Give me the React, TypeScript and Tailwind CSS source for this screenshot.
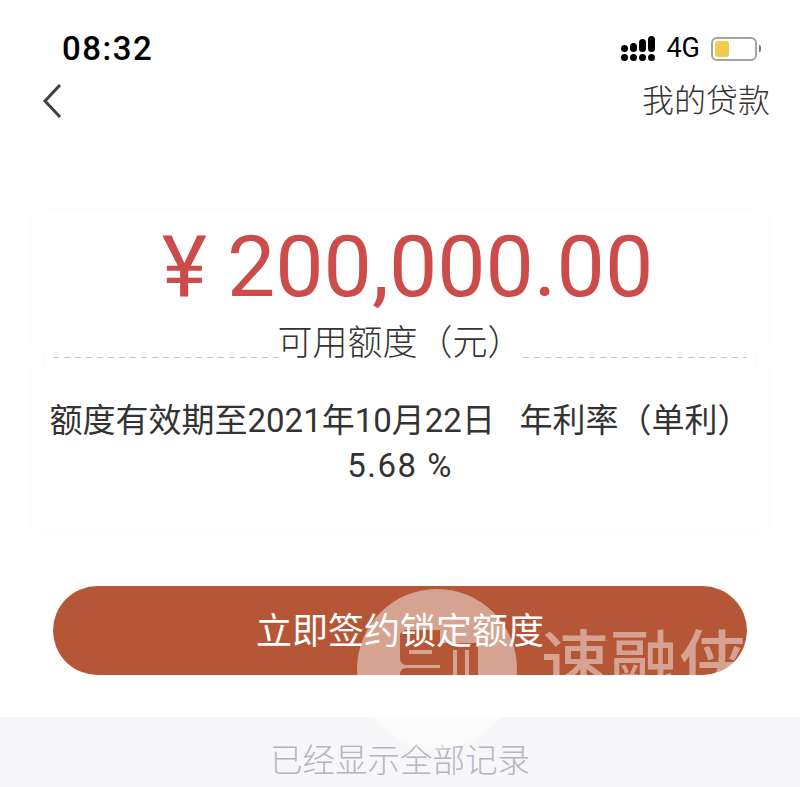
const SANS = "font-['Roboto','Noto_Sans_CJK_SC',sans-serif]"

function SignalIcon() {
  const bars = ['h-[7px]', 'h-[9px]', 'h-[13px]', 'h-[16px]']
  return (
    <div className="flex items-end gap-[2px]">
      {bars.map((h) => (
        <div key={h} className="flex w-[7px] flex-col gap-[2px]">
          <div className={`${h} rounded-full bg-black`} />
          <div className="h-[7px] rounded-full bg-black" />
        </div>
      ))}
    </div>
  )
}

function BatteryIcon() {
  return (
    <div className="flex items-center gap-[2px]">
      <div className="flex h-[24px] w-[46px] items-center rounded-[6px] border-2 border-[#a3a3a3] p-[2px]">
        <div className="h-full w-[14px] rounded-[3px] bg-[#f3ca4c]" />
      </div>
      <div className="h-[7px] w-[2px] rounded-r-full bg-[#777]" />
    </div>
  )
}

function Watermark() {
  return (
    <div className="pointer-events-none absolute left-[357px] top-[589px] flex items-center text-white/45">
      <svg width="160" height="160" viewBox="0 0 160 160">
        <path
          fill="#fff"
          fillOpacity="0.45"
          fillRule="evenodd"
          d="M80 0a80 80 0 1 0 0 160a80 80 0 1 0 0-160ZM49 41h34v35H49a6 6 0 0 1-6-6V47a6 6 0 0 1 6-6ZM52 61v4h23v-4ZM49 79h34v25H43V85a6 6 0 0 1 6-6ZM83 54h38v50H83ZM96 61v29h4V61ZM108 61v29h4V61Z"
        />
      </svg>
      <span className="ml-[24px] -mt-[10px] whitespace-nowrap text-[68px] font-medium leading-none tracking-[1px]">
        速融侠
      </span>
    </div>
  )
}

export default function App() {
  return (
    <div className={`relative h-[787px] w-[800px] overflow-hidden bg-white ${SANS}`}>
      {/* 状态栏 */}
      <div className="flex h-[68px] items-end justify-between pl-[62px] pr-[39px]">
        <span className="text-[33px] font-medium leading-[38px] tracking-[1.5px] text-black">08:32</span>
        <div className="flex items-center gap-[11px] pb-[6px]">
          <SignalIcon />
          <span className="text-[27px] leading-none text-black">4G</span>
          <BatteryIcon />
        </div>
      </div>

      {/* 导航 */}
      <div className="mt-[8px] flex h-[50px] items-center justify-between pl-[42px] pr-[30px]">
        <svg width="20" height="34" viewBox="0 0 20 34" fill="none" stroke="#3f3f3f" strokeWidth="3">
          <path d="M18 1 3 17l15 16" />
        </svg>
        <span className="text-[32px] font-light leading-none text-[#333]">我的贷款</span>
      </div>

      {/* 额度卡片 */}
      <div className="relative mx-[32px] mt-[86px] h-[318px] rounded-[10px] bg-white shadow-[0_0_6px_rgba(0,0,0,0.03)]">
        <div className="flex justify-center pl-[15px] pt-[7px] text-[86px] leading-[96px] text-[#cc4b4b]">
          <span className="mr-[20px]">¥</span>
          <span>200,000.00</span>
        </div>
        <div className="mx-[21px] mt-[5px] flex h-[48px] items-center">
          <div className="mt-[26px] h-px flex-1 bg-[repeating-linear-gradient(90deg,#c4c4c4_0,#c4c4c4_6px,transparent_6px,transparent_11px)]" />
          <span className="whitespace-nowrap text-[35px] font-light leading-[48px] text-[#333]">可用额度（元）</span>
          <div className="mt-[26px] h-px flex-1 bg-[repeating-linear-gradient(90deg,#c4c4c4_0,#c4c4c4_6px,transparent_6px,transparent_11px)]" />
        </div>
        <div className="absolute -left-[2px] top-[132px] h-[28px] w-[14px] rounded-r-full bg-white shadow-[1px_0_3px_rgba(0,0,0,0.03)]" />
        <div className="absolute -right-[2px] top-[132px] h-[28px] w-[14px] rounded-l-full bg-white shadow-[-1px_0_3px_rgba(0,0,0,0.03)]" />
        <div className="mt-[30px] text-center text-[33px] leading-[45px] text-[#333]">
          <p className="whitespace-nowrap">额度有效期至2021年10月22日&nbsp;&nbsp;&nbsp;年利率（单利）</p>
          <p className="tracking-[1.5px]">5.68 %</p>
        </div>
      </div>

      {/* 按钮 */}
      <div className="mx-[53px] mt-[56px] flex h-[89px] items-center justify-center rounded-full bg-[#b55637]">
        <span className="mt-[3px] text-[36px] text-white">立即签约锁定额度</span>
      </div>

      {/* 底部 */}
      <div className="mt-[42px] flex h-[70px] items-center justify-center bg-[#f7f7f9] pt-[18px]">
        <span className="text-[32.5px] font-light text-[#b5b5be]">已经显示全部记录</span>
      </div>

      <Watermark />
    </div>
  )
}
